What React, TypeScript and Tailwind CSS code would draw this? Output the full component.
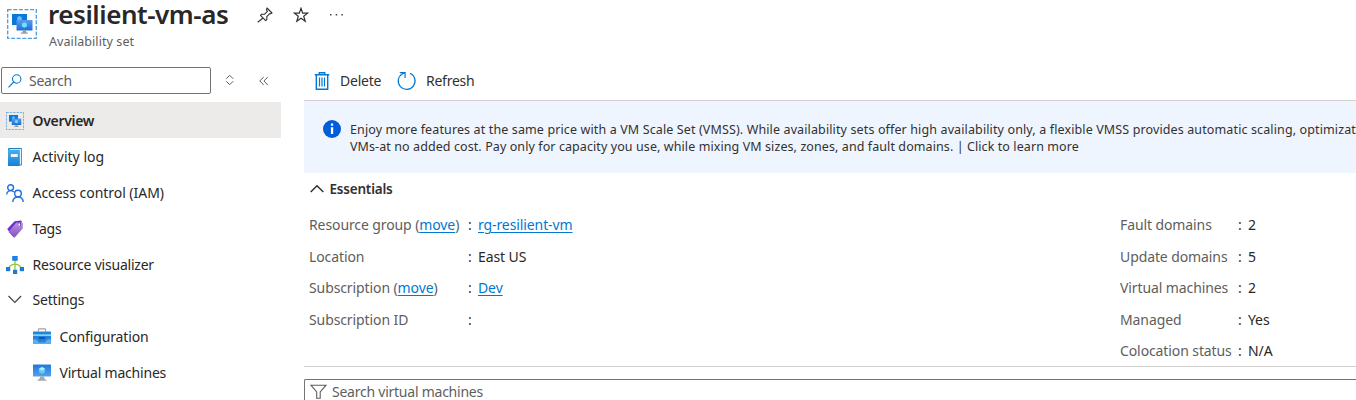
import React from "react";

function AvailabilitySetIcon({ size }: { size: number }) {
  return (
    <svg width={size} height={size} viewBox="0 0 30 30" fill="none" className="shrink-0">
      <defs>
        <linearGradient id="vmFront" x1="0" y1="0" x2="0" y2="1">
          <stop offset="0" stopColor="#5a9cf0" />
          <stop offset="1" stopColor="#1f6fd6" />
        </linearGradient>
      </defs>
      <rect x="0.7" y="0.7" width="28.6" height="28.6" stroke="#4a9fe3" strokeWidth="1.3" strokeDasharray="4 1.6" />
      <rect x="5" y="5" width="15" height="11" fill="#0b78d8" />
      <path d="M12.500 7l2.300 1.200v2.600l-2.300 1.200-2.300-1.200V8.200z" fill="#5cc5f0" />
      <rect x="9.500" y="11" width="16" height="10.500" rx="0.600" fill="url(#vmFront)" />
      <path d="M17.400 13.200l2.500 1.300v2.900l-2.500 1.300-2.500-1.300v-2.900z" fill="#6fe0fa" />
      <path d="M15.600 21.500h3.600v2h1.600v1.300h-7v-1.300h1.800z" fill="#9a9a9a" />
    </svg>
  );
}

function LogIcon() {
  return (
    <svg width="18" height="18" viewBox="0 0 18 18">
      <defs>
        <linearGradient id="log" x1="0" y1="0" x2="0" y2="1">
          <stop offset="0" stopColor="#4aaeea" />
          <stop offset="1" stopColor="#1780d5" />
        </linearGradient>
      </defs>
      <rect x="2" y="0" width="14" height="17.5" rx="1" fill="#1d7fc4" />
      <path d="M3.5 1h11.7v15.6h-1.7V2H3.5z" fill="#e9f5fd" />
      <rect x="2" y="1.8" width="11.6" height="16.2" rx="0.6" fill="url(#log)" />
      <rect x="4.8" y="6" width="7" height="3" rx="0.5" fill="#e8f6ff" />
    </svg>
  );
}

function PeopleIcon() {
  return (
    <svg width="18" height="18" viewBox="0 0 18 18" fill="none" stroke="#1b6fe0" strokeWidth="1.4">
      <circle cx="4.6" cy="3.6" r="2.9" />
      <path d="M.7 10.5C1 8.2 2.6 6.6 4.7 6.6c1.3 0 2.4.5 3.1 1.4" />
      <circle cx="12" cy="9.5" r="3.3" />
      <path d="M6.7 18c.3-3 2.5-5 5.3-5s5 2 5.3 5" />
    </svg>
  );
}

function TagIcon() {
  return (
    <svg width="18" height="18" viewBox="0 0 18 18">
      <defs>
        <linearGradient id="tag" x1="0" y1="0" x2="0" y2="1">
          <stop offset="0" stopColor="#b793e2" />
          <stop offset="1" stopColor="#8553bd" />
        </linearGradient>
      </defs>
      <path d="M8.5 1.2L15 .5l.8.8-.7 6-8.3 9.2L1.2 9z" fill="#7030d0" />
      <path d="M10.4 2.5l5.2-.3 1.4 1.1-.3 5.1-8 9.1-.8-.1L2.5 12z" fill="url(#tag)" />
      <circle cx="13.6" cy="4.7" r="1" fill="#fff" />
      <path d="M11.8 3.5c.3-2 2-2.5 2.7-.8v3.4" fill="none" stroke="#5c27ad" strokeWidth="0.7" />
    </svg>
  );
}

function VisualizerIcon() {
  return (
    <svg width="18" height="18" viewBox="0 0 18 18">
      <path d="M9 4v10M2.5 12C4 9.8 6 8.2 9 8.2s5 1.6 6.5 3.8" stroke="#8ecb3c" strokeWidth="1.3" fill="none" />
      <rect x="6.2" y="0" width="5.5" height="4.8" fill="#1e82dc" />
      <rect x="0" y="11" width="4.2" height="4.2" fill="#1e7ad2" />
      <rect x="7" y="13.8" width="4.2" height="4.2" fill="#1e7ad2" />
      <rect x="13.8" y="11" width="4.2" height="4.2" fill="#1e7ad2" />
    </svg>
  );
}

function ToolboxIcon() {
  return (
    <svg width="18" height="18" viewBox="0 0 18 18">
      <path d="M5.400 3.500V1.800q0-.9.900-.9h5.400q.9 0 .9.900v1.700" fill="none" stroke="#a0a0a0" strokeWidth="1.100" />
      <rect y="3.500" width="18" height="12.500" rx="0.600" fill="#2583dc" />
      <rect y="6.300" width="18" height="1.700" fill="#80d5fa" />
      <path d="M0 11.500q3-.7 4.500 1L6 14.500h6l1.500-2q1.200-1.700 4.500-1V16H0z" fill="#5badf1" />
      <path d="M5.800 9h6.400v1.400l-1.500.8H7.300l-1.500-.8z" fill="#0b58a8" />
    </svg>
  );
}

function VmIcon() {
  return (
    <svg width="18" height="18" viewBox="0 0 18 18">
      <defs>
        <linearGradient id="vm" x1="0" y1="0" x2="0" y2="1">
          <stop offset="0" stopColor="#2078dc" />
          <stop offset="1" stopColor="#55a0f2" />
        </linearGradient>
      </defs>
      <rect y="0.5" width="18" height="12" rx="0.5" fill="url(#vm)" />
      <path d="M9 3.1l3.1 1.7v3.5L9 10 5.900 8.300V4.800z" fill="#62cdf2" />
      <path d="M9 3.100l3.100 1.700L9 6.500 5.900 4.800z" fill="#b5effc" />
      <path d="M7 12.500h4q0 3 2.500 3.300v.9h-9v-.9Q7 15.500 7 12.500z" fill="#a6a9ac" />
    </svg>
  );
}

function ChevronDown() {
  return (
    <svg width="18" height="18" viewBox="0 0 18 18" fill="none" stroke="#444" strokeWidth="1.2">
      <path d="M2.500 5l6.300 6.300 6.300-6.300" />
    </svg>
  );
}

const navItems: { icon: React.ReactNode; label: string; row: string; text: string }[] = [
  { icon: <AvailabilitySetIcon size={18} />, label: "Overview", row: "h-9 bg-[#edebe9] pt-px pl-1.5", text: "font-semibold tracking-[-0.3px]" },
  { icon: <LogIcon />, label: "Activity log", row: "h-9 pt-0.5 pl-1.5", text: "tracking-[0px]" },
  { icon: <PeopleIcon />, label: "Access control (IAM)", row: "h-9 pt-0.5 pl-1.5", text: "tracking-[-0.04px]" },
  { icon: <TagIcon />, label: "Tags", row: "h-9 pt-0.5 pl-1.5", text: "tracking-[-0.24px]" },
  { icon: <VisualizerIcon />, label: "Resource visualizer", row: "h-9 pt-0.5 pl-1.5", text: "tracking-[-0.22px]" },
  { icon: <ChevronDown />, label: "Settings", row: "h-[35px] pl-1.5", text: "tracking-[-0.2px]" },
  { icon: <ToolboxIcon />, label: "Configuration", row: "mt-px h-9 pt-0.5 pl-[33px]", text: "tracking-[-0.14px]" },
  { icon: <VmIcon />, label: "Virtual machines", row: "h-9 pt-0.5 pl-[33px]", text: "tracking-[-0.2px]" },
];

function Sidebar() {
  return (
    <aside className="w-[281px] shrink-0">
      <div className="flex h-[42px] items-start pt-[7px] pl-px">
        <div className="flex h-[27px] w-[210px] items-center rounded-[2px] border border-[#767472] pl-1.5">
          <svg width="14" height="14" viewBox="0 0 14 14" fill="none" stroke="#0078d4" strokeWidth="1.1">
            <circle cx="8.700" cy="5" r="4.200" />
            <path d="M5.700 8L.5 13.300" />
          </svg>
          <span className="ml-[7px] tracking-[-0.24px] text-[#605e5c]">Search</span>
        </div>
        <svg width="10" height="12" viewBox="0 0 10 12" fill="none" stroke="#605e5c" strokeWidth="1" className="mt-[7px] ml-[14px]">
          <path d="M1.200 4.800L4.700 1.300l3.500 3.500M1.200 7.200l3.500 3.500 3.500-3.500" />
        </svg>
        <svg width="10" height="12" viewBox="0 0 10 12" fill="none" stroke="#605e5c" strokeWidth="1" className="mt-2 ml-6">
          <path d="M4.700 2L.8 6l3.900 4M8.800 2L4.900 6l3.900 4" />
        </svg>
      </div>
      <nav>
        {navItems.map((item) => (
          <div key={item.label} className={`flex items-center ${item.row}`}>
            {item.icon}
            <span className={`ml-[8.500px] text-[#292827] ${item.text}`}>{item.label}</span>
          </div>
        ))}
      </nav>
    </aside>
  );
}

function Header() {
  return (
    <header className="flex h-[60px] items-start">
      <div className="ml-[7px] pt-[9px]">
        <AvailabilitySetIcon size={30} />
      </div>
      <div className="ml-[11px] w-[182px] whitespace-nowrap">
        <h1 className="h-7 text-[26px] leading-7 font-semibold tracking-[-0.45px] text-[#292827]">resilient-vm-as</h1>
        <p className="pt-[6px] pl-px text-[12.500px] leading-4 tracking-[0.08px] text-[#605e5c]">Availability set</p>
      </div>
      <svg width="16" height="16" viewBox="0 0 16 16" fill="none" stroke="#323130" strokeWidth="1.1" strokeLinejoin="round" className="mt-[7px] ml-[27px]">
        <path d="M10 1l5 5-1.300.8-.9-.2-3 3 .1 2.800-1.200 1.200L3.500 8.400l1.200-1.200 2.700.1 3-3-.9-1.300zM6 11L.7 15.300" />
      </svg>
      <svg width="16" height="16" viewBox="0 0 16 16" fill="none" stroke="#323130" strokeWidth="1.200" className="mt-[7px] ml-5">
        <path d="M8 1.300l1.700 4.800h5L10.700 9.200l1.500 5.100L8 11.300l-4.200 3 1.500-5.100L1.300 6.100h5z" />
      </svg>
      <svg width="14" height="4" viewBox="0 0 14 4" fill="#484644" className="mt-[13px] ml-[21px]">
        <rect x="0" y="1" width="1.500" height="1.500" />
        <rect x="5.700" y="1" width="1.500" height="1.500" />
        <rect x="11.400" y="1" width="1.500" height="1.500" />
      </svg>
    </header>
  );
}

function Toolbar() {
  return (
    <div className="flex h-[41px] items-center border-b border-[#d2d0ce] pt-px pl-2.5 text-[#323130]">
      <svg width="16" height="18" viewBox="0 0 16 18" fill="none" stroke="#0078d4" strokeWidth="1.200">
        <path d="M.8 2.800h14.400M5.300 2.800V.7h5.400v2.100M2.300 2.800v14.400h11.400V2.800" strokeWidth="1.400" />
        <path d="M5.500 5.500v9M8 5.500v9M10.500 5.500v9" />
      </svg>
      <span className="ml-[10px] w-[42px] tracking-[-0.24px]">Delete</span>
      <svg width="20" height="20" viewBox="0 0 20 20" fill="none" stroke="#0078d4" strokeWidth="1.200" className="ml-[15px]">
        <path d="M13 2.300a8.400 8.400 0 1 1-7.500.4L8 1.800M2.800 1.600h5.300v5.300" />
      </svg>
      <span className="ml-[9px] tracking-[-0.24px]">Refresh</span>
    </div>
  );
}

function Banner() {
  return (
    <div className="flex h-[72px] items-start overflow-hidden rounded-l-[2px] bg-[#eff5ff] pt-[19px] pl-[19px]">
      <svg width="18" height="18" viewBox="0 0 18 18" className="shrink-0">
        <circle cx="9" cy="9" r="9" fill="#015cda" />
        <path d="M7.900 3.500h2.300v2.200H7.900zM7.900 7.300h2.300V14H7.900z" fill="#fff" />
      </svg>
      <p className="ml-[9px] pt-px text-[12.500px] leading-[17px] tracking-[0.088px] whitespace-nowrap text-[#323130]">
        <span className="tracking-[0.125px]">
          Enjoy more features at the same price with a VM Scale Set (VMSS). While availability sets offer high availability only, a flexible VMSS provides automatic scaling, optimizat
        </span>
        <br />
        VMs-at no added cost. Pay only for capacity you use, while mixing VM sizes, zones, and fault domains. | Click to learn more
      </p>
    </div>
  );
}

const link = "text-[#0078d4] underline decoration-1 underline-offset-2";

function Property({ label, move, value, isLink, labelWidth }: { label: string; move?: boolean; value?: string; isLink?: boolean; labelWidth: string }) {
  return (
    <div className="flex h-[31.500px] items-center whitespace-nowrap tracking-[-0.1px]">
      <span className={`${labelWidth} shrink-0 text-[#605e5c]`}>
        {label}
        {move && (
          <>
            {" ("}
            <a className={link}>move</a>)
          </>
        )}
      </span>
      <span className="w-[10px] text-[#323130]">:</span>
      <span className={isLink ? link : "text-[#292827]"}>{value}</span>
    </div>
  );
}

function Essentials() {
  return (
    <section className="h-[194px] border-b border-[#d2d0ce]">
      <div className="flex h-8 items-center pl-1.5">
        <svg width="14" height="10" viewBox="0 0 14 10" fill="none" stroke="#323130" strokeWidth="1.500">
          <path d="M.7 8L7 1.700 13.300 8" />
        </svg>
        <span className="ml-[5.500px] text-[13.500px] font-semibold tracking-[-0.2px] text-[#323130]">Essentials</span>
      </div>
      <div className="flex pt-[4.500px] pl-[5px]">
        <div className="w-[811px] shrink-0">
          <Property label="Resource group" move value="rg-resilient-vm" isLink labelWidth="w-[159px]" />
          <Property label="Location" value="East US" labelWidth="w-[159px]" />
          <Property label="Subscription" move value="Dev" isLink labelWidth="w-[159px]" />
          <Property label="Subscription ID" labelWidth="w-[159px]" />
        </div>
        <div>
          <Property label="Fault domains" value="2" labelWidth="w-[118px]" />
          <Property label="Update domains" value="5" labelWidth="w-[118px]" />
          <Property label="Virtual machines" value="2" labelWidth="w-[118px]" />
          <Property label="Managed" value="Yes" labelWidth="w-[118px]" />
          <Property label="Colocation status" value="N/A" labelWidth="w-[118px]" />
        </div>
      </div>
    </section>
  );
}

export default function App() {
  return (
    <div className="h-[400px] w-[1356px] overflow-hidden bg-white font-['Noto_Sans',sans-serif] text-[14px] leading-5">
      <Header />
      <div className="flex">
        <Sidebar />
        <main className="ml-[23px] w-[1052px] shrink-0">
          <Toolbar />
          <Banner />
          <Essentials />
          <div className="mt-3 flex h-[25px] items-center rounded-tl-[2px] border border-r-0 border-[#767472] pl-[5px]">
            <svg width="17" height="16" viewBox="0 0 17 16" fill="none" stroke="#605e5c" strokeWidth="1.100">
              <path d="M.8 1.200h15.200L10.200 8v6.300H6.700V8z" />
            </svg>
            <span className="ml-[5px] tracking-[-0.24px] text-[#605e5c]">Search virtual machines</span>
          </div>
        </main>
      </div>
    </div>
  );
}
